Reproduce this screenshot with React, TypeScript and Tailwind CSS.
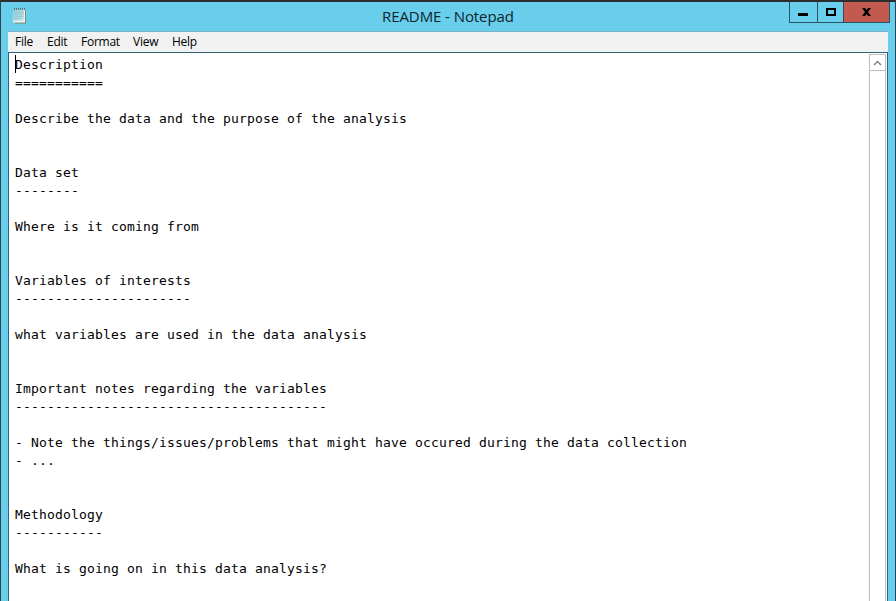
const lines = [
  'Description',
  '===========',
  '',
  'Describe the data and the purpose of the analysis',
  '',
  '',
  'Data set',
  '--------',
  '',
  'Where is it coming from',
  '',
  '',
  'Variables of interests',
  '----------------------',
  '',
  'what variables are used in the data analysis',
  '',
  '',
  'Important notes regarding the variables',
  '---------------------------------------',
  '',
  '- Note the things/issues/problems that might have occured during the data collection',
  '- ...',
  '',
  '',
  'Methodology',
  '-----------',
  '',
  'What is going on in this data analysis?',
];

const menus = [
  { label: 'File', width: 'w-8' },
  { label: 'Edit', width: 'w-[34px]' },
  { label: 'Format', width: 'w-[52px]' },
  { label: 'View', width: 'w-[39px]' },
  { label: 'Help', width: 'w-10' },
];

function NotepadIcon() {
  return (
    <svg width="16" height="18" viewBox="0 0 16 18" className="ml-[11px] mt-[5px]">
      <defs>
        <linearGradient id="paper" x1="0" y1="0" x2="1" y2="1">
          <stop offset="0" stopColor="#8fc9da" />
          <stop offset="1" stopColor="#c9e9ea" />
        </linearGradient>
      </defs>
      <path d="M3 3h11v13.5H3z" fill="#7f8570" />
      <path d="M2 2h11v13.5H1z" fill="#f1f6ea" />
      <path d="M1.5 2H12l-.5 12H.5z" fill="url(#paper)" />
      <path d="M2 5.5h10M2 7.5h10M2 9.5h10M1 11.5h10" stroke="#84bfcc" strokeWidth="0.6" />
      <path d="M2 2h12" stroke="#385b67" strokeWidth="1.5" strokeDasharray="1 1" />
    </svg>
  );
}

function TitleBar() {
  return (
    <header className="flex h-[29px]">
      <div className="w-[381px]"><NotepadIcon /></div>
      <h1 className="mt-1 flex-1 text-[15px] leading-5 font-normal tracking-[-0.08px] whitespace-nowrap text-[#10252d] font-['Open_Sans','Noto_Sans',sans-serif]">
        README - Notepad
      </h1>
      <div className="mr-[5px] flex h-[21px] border-x border-b border-[#2b5263]">
        <button className="flex w-[27px] items-center justify-center">
          <svg width="27" height="20" shapeRendering="crispEdges"><path d="M8 11h10v3H8z" fill="#000" /></svg>
        </button>
        <button className="flex w-[26px] border-l border-[#2b5263]">
          <svg width="25" height="20" shapeRendering="crispEdges"><path d="M8 6h10v8H8zM10 8v4h6V8z" fill="#000" fillRule="evenodd" /></svg>
        </button>
        <button className="flex w-[46px] border-l border-[#51424a] bg-[#c35a50]">
          <svg width="45" height="20"><path d="M18 6h3l1.5 2L24 6h3l-3 4 3 4h-3l-1.5-2-1.5 2h-3l3-4z" fill="#000" /></svg>
        </button>
      </div>
    </header>
  );
}

export default function App() {
  return (
    <div className="flex h-[601px] w-[896px] flex-col overflow-hidden border-t-2 border-r border-l border-t-[#2d2d2d] border-r-[#234451] border-l-[#2d4650] bg-[#69ceeb]">
      <TitleBar />
      <div className="mr-[7px] ml-[7px] flex min-h-0 flex-1 flex-col">
        <nav className="flex h-[21px] shrink-0 border-t border-[#77b4c8] bg-[#f1f1f1] pl-[7px] text-[12px] leading-5 text-black font-['Open_Sans','Noto_Sans',sans-serif]">
          {menus.map((m) => (
            <span key={m.label} className={`${m.width} tracking-[-0.25px]`}>{m.label}</span>
          ))}
        </nav>
        <main className="flex min-h-0 flex-1 border-x border-t border-[#315f7c] bg-white">
          <div className="relative flex-1 pt-[3px] pl-[6px]">
            <div className="absolute top-[2px] left-[6px] h-[18px] w-px bg-black" />
            <pre className="text-[13px] leading-[18px] tracking-[0.174px] text-black font-['DejaVu_Sans_Mono',monospace]">
              {lines.join('\n')}
            </pre>
          </div>
          <div className="mt-px mr-px flex w-[17px] flex-col border-x border-t border-[#bdbdbd]">
            <div className="flex h-[16px] items-center justify-center border-b border-[#bdbdbd]">
              <svg width="9" height="6" viewBox="0 0 9 6"><path d="M1 5l3.5-3.5L8 5" fill="none" stroke="#858585" strokeWidth="1.5" /></svg>
            </div>
          </div>
        </main>
      </div>
    </div>
  );
}
